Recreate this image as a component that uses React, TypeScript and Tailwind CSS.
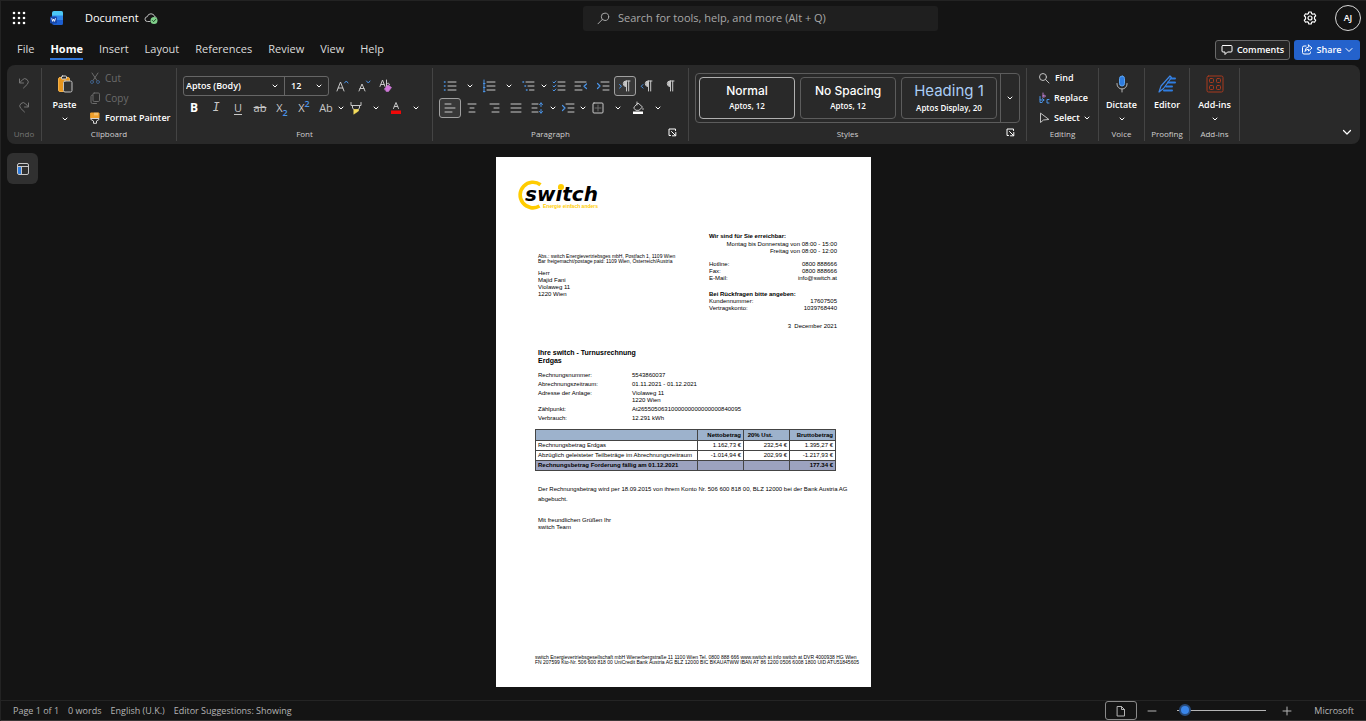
import type { ReactNode } from "react";
import clsx from "clsx";

const tabs = ["File", "Home", "Insert", "Layout", "References", "Review", "View", "Help"];

const styleCards = [
  { name: "Normal", font: "Aptos, 12", active: true, heading: false },
  { name: "No Spacing", font: "Aptos, 12", active: false, heading: false },
  { name: "Heading 1", font: "Aptos Display, 20", active: false, heading: true },
];

/* ---------- Icons ---------- */

const Icon = ({ size = 14, children }: { size?: number; children: ReactNode }) => (
  <svg
    width={size}
    height={size}
    viewBox={`0 0 ${size} ${size}`}
    fill="none"
    stroke="currentColor"
    strokeLinecap="round"
    strokeLinejoin="round"
    className="shrink-0"
    aria-hidden="true"
  >
    {children}
  </svg>
);

const Chevron = () => (
  <Icon size={6}>
    <path d="M1 2l2 2 2-2" />
  </Icon>
);

const WordLogo = () => (
  <Icon size={16}>
    <g stroke="none">
      <path d="M5 1h7.500q1.500 0 1.500 1.500V6H3V3q0-2 2-2z" fill="#4cc8f5" />
      <path d="M3 5.500h11V10H3z" fill="#2f86ea" />
      <path d="M3 10h11v3.500q0 1.500-1.500 1.500H5q-2 0-2-2z" fill="#1d5fd0" />
      <rect x="1" y="6.500" width="7" height="7" rx="1.200" fill="#1646a8" />
    </g>
    <path d="M2.800 8.600l.9 2.800.9-2.400.9 2.400.9-2.800" stroke="#fff" strokeWidth=".9" />
  </Icon>
);

const CloudSaved = () => (
  <Icon size={14}>
    <path d="M6 10.500H3.500a2.400 2.400 0 01-.2-4.800 3.800 3.800 0 017.400 0 2.200 2.200 0 011.600.8" stroke="#bdbdbd" />
    <circle cx="10" cy="9.500" r="3.500" fill="#7fd08a" stroke="none" />
    <path d="M8.500 9.600l1.100 1.100 2-2.200" stroke="#1b3a20" />
  </Icon>
);

const Gear = () => (
  <Icon size={14}>
    <path
      d="M5.800 1h2.400l.4 1.600 1.300.7 1.600-.5 1.200 2-1.200 1.200v2l1.200 1.200-1.200 2-1.600-.5-1.300.7L8.200 13H5.800l-.4-1.600-1.300-.7-1.600.5-1.200-2L2.500 8V6L1.300 4.800l1.200-2 1.600.5 1.300-.7z"
      strokeWidth="1.200"
    />
    <circle cx="7" cy="7" r="2" strokeWidth="1.200" />
  </Icon>
);

const SearchIcon = ({ flip = false }: { flip?: boolean }) => (
  <Icon size={13}>
    {flip ? (
      <>
        <circle cx="8" cy="4.800" r="3.700" />
        <path d="M5.300 7.500L1 11.800" />
      </>
    ) : (
      <>
        <circle cx="5" cy="5" r="3.500" />
        <path d="M7.700 7.700L11 11" />
      </>
    )}
  </Icon>
);

const UndoIcon = () => (
  <Icon size={12}>
    <path d="M1.500 2v4h4M1.700 5.800l2.700-3a3.300 3.300 0 014.900 4.500L5.500 11" />
  </Icon>
);

const RedoIcon = () => (
  <Icon size={12}>
    <path d="M10.500 2v4h-4M10.300 5.800l-2.700-3a3.300 3.300 0 00-4.900 4.500L6.500 11" />
  </Icon>
);

const PasteIcon = () => (
  <Icon size={18}>
    <rect x="2.500" y="2.500" width="11" height="14" rx="1.500" fill="#e8961e" stroke="#f2b04a" />
    <rect x="5.500" y="1" width="5" height="3" rx="1" fill="#292929" stroke="#d8d8d8" />
    <rect x="7.500" y="6" width="8.500" height="11" rx="1.500" fill="#333" stroke="#c4c4c4" />
  </Icon>
);

const CutIcon = () => (
  <Icon size={12}>
    <path d="M3 1l5 7.500M9 1L4 8.500" />
    <circle cx="3" cy="10" r="1.500" stroke="#3f5f86" />
    <circle cx="9" cy="10" r="1.500" stroke="#3f5f86" />
  </Icon>
);

const CopyIcon = () => (
  <Icon size={12}>
    <rect x="4" y="1" width="6.500" height="8.500" rx="1.200" />
    <path d="M3.500 3q-1.500 0-1.500 1.500V10q0 1.500 1.500 1.500h4" />
  </Icon>
);

const PainterIcon = () => (
  <Icon size={12}>
    <path d="M2 1h8v5H2z" fill="#f0a02c" stroke="#f0a02c" />
    <path d="M6 1v2M8 1v2" stroke="#fff0c8" strokeWidth=".8" />
    <path d="M2 6.500h8v1L7.500 9v2.300h-3V9L2 7.500z" stroke="#d6d6d6" />
  </Icon>
);

const GrowFont = () => (
  <Icon>
    <path d="M2 12l3.500-9L9 12M3.200 9h4.600" />
    <path d="M9.500 4l1.800-2L13 4" stroke="#4a94e8" />
  </Icon>
);

const ShrinkFont = () => (
  <Icon>
    <path d="M2 12l3-7 3 7M3 9.500h4" />
    <path d="M9.500 2l1.800 2L13 2" stroke="#4a94e8" />
  </Icon>
);

const ClearFormat = () => (
  <Icon>
    <path d="M1 7.500L3.500 1 6 7.500M2 5.500h3M7.500 1v6.500M7.500 5q2.500-2 3 .5" />
    <path d="M5.500 9.800l3.500-4 3.500 2.700-3 4H7.500z" fill="#cf78d8" stroke="#cf78d8" strokeWidth=".6" />
  </Icon>
);

const Highlighter = () => (
  <Icon>
    <path d="M2 1.500v3h10v-3M3.500 4.500V7l2 2h3l2-2V4.500" />
    <path d="M5 8.500h4.500v1.500L5 13z" fill="#f5dd5c" stroke="#f5dd5c" strokeWidth=".6" />
  </Icon>
);

const FontColor = () => (
  <Icon>
    <path d="M4.500 7.500L7 1.500l2.500 6M5.300 5.500h3.400" />
    <path d="M2 9.500h10v3.500H2z" fill="#f00808" stroke="none" />
  </Icon>
);

const lines = "M5 3h8M5 7h8M5 11h8";

const Bullets = () => (
  <Icon>
    <path d={lines} />
    <path d="M1.500 3h.5M1.500 7h.5M1.500 11h.5" stroke="#4a94e8" strokeWidth="1.600" />
  </Icon>
);

const Numbering = () => (
  <Icon>
    <path d={lines} />
    <path d="M2 1v12M1.500 4.500h1.500M1.500 8.500h1.500M1.500 12.500h1.500" stroke="#4a94e8" />
  </Icon>
);

const Multilevel = () => (
  <Icon>
    <path d="M4 3h8M6 7h6M7.500 11H12" />
    <path d="M1 3h.5M3 7h.5M4.500 11H5" stroke="#4a94e8" strokeWidth="1.600" />
  </Icon>
);

const Checklist = () => (
  <Icon>
    <path d="M6 3h7M6 7h7M6 11h7" />
    <path d="M1 3l1 1 1.800-2M1 7l1 1 1.800-2M1 11l1 1 1.800-2" stroke="#4a94e8" />
  </Icon>
);

const Outdent = () => (
  <Icon>
    <path d="M1 3h11M1 7h5.500M1 11h7" />
    <path d="M12.500 5l-2.500 2.300 2.500 2.200" stroke="#4a94e8" strokeWidth="1.200" />
  </Icon>
);

const Indent = () => (
  <Icon>
    <path d="M5 3h8M7 7h6M7 11h6" />
    <path d="M1.500 4.500L4 7l-2.500 2.500" stroke="#4a94e8" strokeWidth="1.200" />
  </Icon>
);

const Pilcrow = ({ arrow }: { arrow?: "left" | "right" }) => (
  <Icon>
    <path d="M8 7.500a2.700 2.700 0 010-5.500h4M8.500 2v10M10.700 2v10" />
    <path d="M8 2.300v5a2.600 2.600 0 010-5z" fill="currentColor" />
    {arrow === "right" && <path d="M1.500 5.500l2 1.800-2 1.800" stroke="#4a94e8" />}
    {arrow === "left" && <path d="M3 5.500L1.200 7.300 3 9.100" stroke="#4a94e8" />}
  </Icon>
);

const AlignLeft = () => (
  <Icon>
    <path d="M2 3h6M2 7h10M2 11h7" />
  </Icon>
);

const AlignCenter = () => (
  <Icon>
    <path d="M3 3h8M5 7h4M4 11h6" />
  </Icon>
);

const AlignRight = () => (
  <Icon>
    <path d="M3 3h9M7 7h5M5 11h7" />
  </Icon>
);

const Justify = () => (
  <Icon>
    <path d="M2 3h10M2 7h10M2 11h10" />
  </Icon>
);

const LineSpacing = () => (
  <Icon>
    <path d="M1 3h6M1 7h5M1 11h6" />
    <path d="M10 2v3.500M10 8.500V12M8.500 3.500L10 1.800l1.500 1.700M8.500 10.500l1.500 1.700 1.500-1.700" stroke="#4a94e8" />
  </Icon>
);

const Borders = () => (
  <Icon>
    <rect x="2" y="2" width="10" height="10" rx="1" />
    <path d="M7 4v6M4 7h6" stroke="#6c6c6c" />
  </Icon>
);

const Shading = () => (
  <Icon>
    <path d="M4 5l3-3 4.500 4L8 9.300H5L3 7.500zM6 1v3M12 7.500v1" />
    <path d="M2 10.500h10V13H2z" fill="#fff" stroke="none" />
  </Icon>
);

const Launcher = () => (
  <Icon size={9}>
    <path d="M2.500 7.500H1V1h6.500v1.500M3.500 3.500l4 4M7.800 4.500v3.300H4.500" />
  </Icon>
);

const ReplaceIcon = () => (
  <Icon size={12}>
    <path d="M5 1v4M5 3.500q2.500-1 2.500.5T5 5" stroke="#b77bc8" />
    <path d="M2 4.500v3.500h4M4.500 6.500L6 8l-1.500 1.500M11 7.500H9V11h2M2 8v2.500h2" stroke="#4a94e8" />
  </Icon>
);

const SelectIcon = () => (
  <Icon size={12}>
    <path d="M2.500 1.500v9l3-2.500 5-.5z" />
  </Icon>
);

const Microphone = () => (
  <Icon size={20}>
    <rect x="7.500" y="2" width="5" height="10" rx="2.500" fill="#2f7de0" stroke="#5aa2f0" />
    <path d="M5 9.500v.5a5 5 0 0010 0v-.5M10 15v3" stroke="#b5b5b5" />
  </Icon>
);

const EditorIcon = () => (
  <Icon size={20}>
    <path d="M2 18l2-6L13 2l1.500 1.500-8 11z" stroke="#3d86e6" strokeWidth="1.200" />
    <path d="M13.500 4.500H18M11 8.500h7M9 12.500h6M7 16.500h8" stroke="#2f7de0" strokeWidth="2" />
  </Icon>
);

const AddInsIcon = () => (
  <Icon size={20}>
    <g stroke="#a93a1e">
      <rect x="2" y="2" width="16" height="16" rx="1.500" />
      <rect x="4.500" y="4.500" width="4" height="4" rx="1" />
      <rect x="11.500" y="4.500" width="4" height="4" rx="1" />
      <rect x="4.500" y="11.500" width="4" height="4" rx="1" />
      <rect x="11.500" y="11.500" width="4" height="4" rx="1" />
    </g>
  </Icon>
);

const SwitchLogo = () => (
  <svg width="86" height="32" viewBox="0 0 86 32" role="img" aria-label="switch">
    <path d="M24.500 5.700A12.800 12.800 0 1023.500 27" fill="none" stroke="#fc0" strokeWidth="3.600" />
    <text x="9" y="22" fontFamily="'DejaVu Sans', sans-serif" fontSize="20" fontWeight="700" fontStyle="italic" fill="#000">
      switch
    </text>
    <circle cx="45" cy="8" r="3" fill="#fc0" />
    <text x="27" y="29" fontFamily="'Liberation Sans', Arial, sans-serif" fontSize="5" fontWeight="700" fill="#fc0">
      Energie einfach anders
    </text>
  </svg>
);

/* ---------- Ribbon pieces ---------- */

type GroupProps = {
  label: string;
  className: string;
  dim?: boolean;
  launcher?: boolean;
  children: ReactNode;
};

const Group = ({ label, className, dim, launcher, children }: GroupProps) => (
  <section className={clsx("flex shrink-0 flex-col border-r border-[#444]", className)}>
    <div className="h-[60px]">{children}</div>
    <div className="flex h-[13px] items-start">
      <span className={clsx("flex-1 text-center text-[8px] leading-3", dim ? "text-[#757575]" : "text-[#d0d0d0]")}>
        {label}
      </span>
      {launcher && (
        <button aria-label={`${label} settings`} className="flex w-5">
          <Launcher />
        </button>
      )}
    </div>
  </section>
);

type ToolProps = { label: string; active?: boolean; children: ReactNode };

const Tool = ({ label, active, children }: ToolProps) => (
  <button
    aria-label={label}
    className={clsx(
      "flex h-5 w-[22px] shrink-0 items-center justify-center text-[#c8c8c8]",
      active && "rounded-[3px] border border-[#a0a0a0] bg-[#383838]",
    )}
  >
    {children}
  </button>
);

const More = ({ className, label }: { className: string; label: string }) => (
  <button aria-label={`${label} options`} className={clsx("flex h-5 shrink-0 items-center justify-center", className)}>
    <Chevron />
  </button>
);

type SideToolProps = { icon: ReactNode; label: string; disabled?: boolean; chevron?: boolean };

const SideTool = ({ icon, label, disabled, chevron }: SideToolProps) => (
  <button
    disabled={disabled}
    className={clsx(
      "flex h-5 items-center gap-1 whitespace-nowrap",
      disabled ? "text-[10px] text-[#6b6b6b]" : "text-[9px] font-semibold",
    )}
  >
    <span className={disabled ? "text-[#6b6b6b]" : "text-[#c0c0c0]"}>{icon}</span>
    {label}
    {chevron && <Chevron />}
  </button>
);

const BigTool = ({ icon, label, chevron }: { icon: ReactNode; label: string; chevron?: boolean }) => (
  <button className="flex w-full flex-col items-center pt-[6px] text-[9px] font-semibold">
    <span className="flex h-5 items-center">{icon}</span>
    <span className="mt-1 leading-[14px] whitespace-nowrap">{label}</span>
    {chevron && (
      <span className="mt-1">
        <Chevron />
      </span>
    )}
  </button>
);

const Ribbon = () => (
  <div className="mr-[6px] ml-[6px] flex rounded-lg bg-[#292929] py-[3px]">
    <Group label="Undo" dim className="w-[35px]">
      <div className="flex flex-col items-center gap-3 pt-[9px] text-[#757575]">
        <button aria-label="Undo" disabled>
          <UndoIcon />
        </button>
        <button aria-label="Redo" disabled>
          <RedoIcon />
        </button>
      </div>
    </Group>

    <Group label="Clipboard" className="w-[135px]">
      <div className="flex gap-[2px]">
        <div className="w-[45px]">
          <BigTool icon={<PasteIcon />} label="Paste" chevron />
        </div>
        <div>
          <SideTool icon={<CutIcon />} label="Cut" disabled />
          <SideTool icon={<CopyIcon />} label="Copy" disabled />
          <SideTool icon={<PainterIcon />} label="Format Painter" />
        </div>
      </div>
    </Group>

    <Group label="Font" className="w-[256px]">
      <div className="flex flex-col gap-[2px] px-[6px] pt-2">
        <div className="flex">
          <div className="mr-[2px] flex h-5 rounded-[3px] border border-[#666] font-semibold">
            <label className="relative flex items-center border-r border-[#666]">
              <select aria-label="Font name" className="h-full w-[100px] appearance-none pl-[2px] text-[9px] outline-none">
                <option>Aptos (Body)</option>
              </select>
              <span className="pointer-events-none absolute right-[6px]">
                <Chevron />
              </span>
            </label>
            <label className="relative flex items-center">
              <select aria-label="Font size" className="h-full w-[43px] appearance-none pl-[6px] text-[9px] outline-none">
                <option>12</option>
              </select>
              <span className="pointer-events-none absolute right-[6px]">
                <Chevron />
              </span>
            </label>
          </div>
          <Tool label="Grow font"><GrowFont /></Tool>
          <Tool label="Shrink font"><ShrinkFont /></Tool>
          <Tool label="Clear formatting"><ClearFormat /></Tool>
        </div>
        <div className="flex text-[12px]">
          <Tool label="Bold"><b className="text-white">B</b></Tool>
          <Tool label="Italic"><i className="font-['Liberation_Mono',monospace]">I</i></Tool>
          <Tool label="Underline"><span className="text-[11px] underline underline-offset-2">U</span></Tool>
          <Tool label="Strikethrough"><s className="text-[11px]">ab</s></Tool>
          <Tool label="Subscript">
            <span className="text-[11px]">X</span>
            <span className="self-end text-[9px] leading-[11px] font-semibold text-[#4a94e8]">2</span>
          </Tool>
          <Tool label="Superscript">
            <span className="text-[11px]">X</span>
            <span className="self-start text-[9px] leading-[11px] font-semibold text-[#4a94e8]">2</span>
          </Tool>
          <Tool label="Change case"><span className="text-[11px]">Ab</span></Tool>
          <More label="Change case" className="w-2" />
          <Tool label="Highlight"><Highlighter /></Tool>
          <More label="Highlight" className="w-[18px]" />
          <Tool label="Font color"><FontColor /></Tool>
          <More label="Font color" className="w-[18px]" />
        </div>
      </div>
    </Group>

    <Group label="Paragraph" launcher className="w-[256px]">
      <div className="flex flex-col gap-[2px] px-[6px] pt-2">
        <div className="flex">
          <Tool label="Bullets"><Bullets /></Tool>
          <More label="Bullets" className="w-[17px]" />
          <Tool label="Numbering"><Numbering /></Tool>
          <More label="Numbering" className="w-[18px]" />
          <Tool label="Multilevel list"><Multilevel /></Tool>
          <More label="Multilevel list" className="w-2" />
          <Tool label="Checklist"><Checklist /></Tool>
          <Tool label="Decrease indent"><Outdent /></Tool>
          <Tool label="Increase indent"><Indent /></Tool>
          <Tool label="Left to right" active><Pilcrow arrow="right" /></Tool>
          <Tool label="Right to left"><Pilcrow arrow="left" /></Tool>
          <Tool label="Show marks"><Pilcrow /></Tool>
        </div>
        <div className="flex">
          <Tool label="Align left" active><AlignLeft /></Tool>
          <Tool label="Center"><AlignCenter /></Tool>
          <Tool label="Align right"><AlignRight /></Tool>
          <Tool label="Justify"><Justify /></Tool>
          <Tool label="Line spacing"><LineSpacing /></Tool>
          <More label="Line spacing" className="w-2" />
          <Tool label="Special indent"><Indent /></Tool>
          <More label="Special indent" className="w-2" />
          <Tool label="Borders"><Borders /></Tool>
          <More label="Borders" className="w-[18px]" />
          <Tool label="Shading"><Shading /></Tool>
          <More label="Shading" className="w-[18px]" />
        </div>
      </div>
    </Group>

    <Group label="Styles" launcher className="w-[338px]">
      <div className="px-[6px] pt-[5px]">
        <div className="flex h-[50px] rounded-[4px] border border-[#5c5c5c]">
          <div className="flex flex-1 gap-[5px] p-[3px]">
            {styleCards.map((card) => (
              <button
                key={card.name}
                className={clsx(
                  "flex w-24 flex-col items-center justify-center rounded-[4px] border",
                  card.active ? "border-[#b0b0b0]" : "border-[#5c5c5c]",
                )}
              >
                <span
                  className={clsx(
                    "font-['Inter','Open_Sans',sans-serif] whitespace-nowrap",
                    card.heading ? "text-[15px] leading-5 text-[#a9cdf5]" : "text-[12px] leading-4 font-medium",
                  )}
                >
                  {card.name}
                </span>
                <span className="text-[8px] leading-[14px] font-semibold">{card.font}</span>
              </button>
            ))}
          </div>
          <button aria-label="More styles" className="flex w-[19px] items-center justify-center border-l border-[#5c5c5c]">
            <Chevron />
          </button>
        </div>
      </div>
    </Group>

    <Group label="Editing" className="w-[72px]">
      <div className="pl-[11px]">
        <SideTool icon={<SearchIcon />} label="Find" />
        <SideTool icon={<ReplaceIcon />} label="Replace" />
        <SideTool icon={<SelectIcon />} label="Select" chevron />
      </div>
    </Group>

    <Group label="Voice" className="w-[46px]">
      <BigTool icon={<Microphone />} label="Dictate" chevron />
    </Group>
    <Group label="Proofing" className="w-[45px]">
      <BigTool icon={<EditorIcon />} label="Editor" />
    </Group>
    <Group label="Add-ins" className="w-[50px]">
      <BigTool icon={<AddInsIcon />} label="Add-ins" chevron />
    </Group>

    <button aria-label="Ribbon options" className="mr-2 mb-1 ml-auto self-end">
      <Icon size={10}>
        <path d="M1.500 3.500L5 7l3.500-3.500" strokeWidth="1.200" />
      </Icon>
    </button>
  </div>
);

/* ---------- Document ---------- */

const Row = ({ left, right }: { left: string; right: string }) => (
  <div className="flex justify-between">
    <span>{left}</span>
    <span>{right}</span>
  </div>
);

const Invoice = () => (
  <article className="flex h-[530px] w-[375px] flex-col bg-white font-['Liberation_Sans',Arial,sans-serif] text-[6px] leading-[7px] text-black">
    <div className="h-[75px] pt-[22px] pl-5">
      <SwitchLogo />
    </div>

    <div className="flex justify-between pr-[34px] pl-[42px]">
      <div>
        <div className="pt-[22px] text-[5px] leading-[5px] whitespace-nowrap">
          <p>Abs.: switch Energievertriebsges mbH, Postfach 1, 1109 Wien</p>
          <p>Bar freigemacht/postage paid: 1109 Wien, Österreich/Austria</p>
        </div>
        <address className="pt-[6px] not-italic">
          Herr
          <br />
          Majid Fani
          <br />
          Violaweg 11
          <br />
          1220 Wien
        </address>
      </div>
      <div className="w-[128px] whitespace-nowrap">
        <p className="mb-px leading-2 font-bold">Wir sind für Sie erreichbar:</p>
        <p className="text-right">Montag bis Donnerstag von 08:00 - 15:00</p>
        <p className="mb-[6px] text-right">Freitag von 08:00 - 12:00</p>
        <Row left="Hotline:" right="0800 888666" />
        <Row left="Fax:" right="0800 888666" />
        <Row left="E-Mail:" right="info@switch.at" />
        <p className="mt-2 leading-2 font-bold">Bei Rückfragen bitte angeben:</p>
        <Row left="Kundennummer:" right="17607505" />
        <Row left="Vertragskonto:" right="1039768440" />
        <p className="mt-[11px] text-right whitespace-pre">3  December 2021</p>
      </div>
    </div>

    <div className="pt-[19px] pl-[39px]">
      <h1 className="px-[3px] text-[7px] leading-2 font-bold">
        Ihre switch - Turnusrechnung
        <br />
        Erdgas
      </h1>
      <dl className="grid grid-cols-[94px_1fr] gap-y-[2px] px-[3px] pt-[7px]">
        <dt>Rechnungsnummer:</dt>
        <dd>5543860037</dd>
        <dt>Abrechnungszeitraum:</dt>
        <dd>01.11.2021 - 01.12.2021</dd>
        <dt>Adresse der Anlage:</dt>
        <dd>
          Violaweg 11
          <br />
          1220 Wien
        </dd>
        <dt>Zählpunkt:</dt>
        <dd>At2655050631000000000000000840095</dd>
        <dt>Verbrauch:</dt>
        <dd>12.291 kWh</dd>
      </dl>

      <table className="mt-[7px] w-[300px] table-fixed border-collapse text-right whitespace-nowrap [&_td]:h-[10px] [&_td]:border [&_td]:border-[#444] [&_td]:px-[2px] [&_th]:h-[11px] [&_th]:border [&_th]:border-[#444] [&_th]:px-[2px]">
        <colgroup>
          <col className="w-[162px]" />
          <col className="w-[46px]" />
          <col className="w-[46px]" />
          <col className="w-[46px]" />
        </colgroup>
        <thead className="bg-[#9db2cc]">
          <tr>
            <th />
            <th>Nettobetrag</th>
            <th className="text-left">&nbsp;20% Ust.</th>
            <th>Bruttobetrag</th>
          </tr>
        </thead>
        <tbody>
          <tr>
            <td className="text-left">Rechnungsbetrag Erdgas</td>
            <td>1.162,73 €</td>
            <td>232,54 €</td>
            <td>1.395,27 €</td>
          </tr>
          <tr>
            <td className="text-left">Abzüglich geleisteter Teilbeträge im Abrechnungszeitraum</td>
            <td>-1.014,94 €</td>
            <td>202,99 €</td>
            <td>-1.217,93 €</td>
          </tr>
          <tr className="bg-[#9ca3c0] font-bold">
            <td className="text-left">Rechnungsbetrag Forderung fällig am 01.12.2021</td>
            <td />
            <td />
            <td>177.34 €</td>
          </tr>
        </tbody>
      </table>

      <p className="px-[3px] pt-[13px] leading-[10px]">
        Der Rechnungsbetrag wird per 18.09.2015 von ihrem Konto Nr. 506 600 818 00, BLZ 12000 bei der Bank Austria AG
        <br />
        abgebucht.
      </p>
      <p className="px-[3px] pt-[13px]">
        Mit freundlichen Grüßen Ihr
        <br />
        switch Team
      </p>
    </div>

    <footer className="mt-auto pb-[22px] pl-[39px] text-[5px] leading-[5px] whitespace-nowrap">
      <p>switch Energievertriebsgesellschaft mbH Wienerbergstraße 11 1100 Wien Tel. 0800 888 666 www.switch at info switch at DVR 4000938 HG Wien</p>
      <p>FN 207599 Kto-Nr. 506 600 818 00 UniCredit Bank Austria AG BLZ 12000 BIC BKAUATWW IBAN AT 86 1200 0506 6008 1800 UID ATU51845605</p>
    </footer>
  </article>
);

/* ---------- App ---------- */

const App = () => {
  return (
    <div className="flex min-h-screen flex-col border-t border-l border-[#232323] bg-[#141414] font-['Open_Sans','Noto_Sans',sans-serif] text-white">
      {/* Title bar */}
      <header className="grid h-[34px] grid-cols-[582fr_355fr_428fr] items-center">
        <div className="flex items-center pl-[11px]">
          <button aria-label="App launcher" className="text-white">
            <Icon size={14}>
              <g fill="currentColor" stroke="none">
                {[2, 7, 12].map((y) => [2, 7, 12].map((x) => <circle key={`${x}-${y}`} cx={x} cy={y} r="1.300" />))}
              </g>
            </Icon>
          </button>
          <span className="ml-[23px]">
            <WordLogo />
          </span>
          <span className="ml-5 text-[11px] font-medium">Document</span>
          <span className="ml-[5px]">
            <CloudSaved />
          </span>
        </div>
        <label className="flex h-[25px] items-center gap-2 rounded-[3px] bg-[#1f1f1f] px-[14px] text-[#a8a8a8]">
          <SearchIcon flip />
          <input
            type="text"
            aria-label="Search"
            placeholder="Search for tools, help, and more (Alt + Q)"
            className="w-full text-[11px] outline-none placeholder:text-[#a8a8a8]"
          />
        </label>
        <div className="flex items-center justify-end gap-[18px] pr-[5px]">
          <button aria-label="Settings">
            <Gear />
          </button>
          <button className="flex size-[26px] items-center justify-center rounded-full border border-[#d8d8d8] text-[9px] font-semibold">
            AJ
          </button>
        </div>
      </header>

      {/* Tabs */}
      <div className="flex h-[30px] items-center justify-between pr-[6px] pl-4">
        <nav className="flex gap-4 text-[11px]">
          {tabs.map((tab) => (
            <a
              key={tab}
              href="#"
              className={clsx("border-b-2 leading-[18px]", tab === "Home" ? "border-[#2f75d8] font-bold" : "border-transparent text-[#dcdcdc]")}
            >
              {tab}
            </a>
          ))}
        </nav>
        <div className="flex gap-1 text-[9px] font-semibold">
          <button className="flex h-5 w-[75px] items-center justify-center gap-1 rounded-[3px] border border-[#6a6a6a] bg-[#242424]">
            <Icon size={12}>
              <path d="M2 1.500h8q1 0 1 1V7q0 1-1 1H6.500L4 10.500V8H2Q1 8 1 7V2.500q0-1 1-1z" />
            </Icon>
            Comments
          </button>
          <button className="flex h-5 w-[66px] items-center justify-center gap-1 rounded-[3px] bg-[#2462cc]">
            <Icon size={12}>
              <path d="M5 2H3Q1.500 2 1.500 3.500v5Q1.500 10 3 10h5q1.500 0 1.500-1.500V8M7.500 1L11 4 7.500 7V5.300Q5 5.300 4 7.500 4 3.300 7.500 2.800z" />
            </Icon>
            Share
            <Icon size={8}>
              <path d="M1 2.500l3 3 3-3" />
            </Icon>
          </button>
        </div>
      </div>

      <Ribbon />

      {/* Canvas */}
      <main className="grid flex-1 grid-cols-[1fr_auto_1fr] items-start py-[13px]">
        <button aria-label="Navigation" className="-mt-1 ml-[6px] flex size-[31px] items-center justify-center rounded-md bg-[#303030]">
          <Icon size={14}>
            <path d="M2 4h3v8H3q-1 0-1-1z" fill="#2f7de0" stroke="none" />
            <rect x="1.500" y="1.500" width="11" height="11" rx="1.500" stroke="#c8c8c8" />
            <path d="M2 4.500h10M5.500 5v7" stroke="#c8c8c8" />
          </Icon>
        </button>
        <Invoice />
      </main>

      {/* Status bar */}
      <footer className="flex h-[21px] items-center border-t border-b border-t-[#242424] border-b-[#3a3636] pr-3 pl-3 text-[9px] text-[#b4b4b4]">
        <div className="flex flex-1 gap-[9px] whitespace-nowrap">
          <span>Page 1 of 1</span>
          <span>0 words</span>
          <span>English (U.K.)</span>
          <span>Editor Suggestions: Showing</span>
        </div>
        <button aria-label="Page view" className="flex h-[19px] w-8 items-center justify-center rounded-[3px] border border-[#8a8a8a]">
          <Icon size={12}>
            <path d="M2.500 1.500h4l3 3V11h-7zM6.500 1.500v3h3" />
          </Icon>
        </button>
        <button aria-label="Zoom out" className="ml-[10px]">
          <Icon size={10}>
            <path d="M1 5h8" />
          </Icon>
        </button>
        <input
          type="range"
          aria-label="Zoom"
          min={0}
          max={100}
          defaultValue={2}
          className="mr-4 ml-5 h-3 w-[89px] appearance-none bg-transparent [&::-webkit-slider-runnable-track]:h-px [&::-webkit-slider-runnable-track]:bg-[#b4b4b4] [&::-webkit-slider-thumb]:-mt-[6px] [&::-webkit-slider-thumb]:size-3 [&::-webkit-slider-thumb]:appearance-none [&::-webkit-slider-thumb]:rounded-full [&::-webkit-slider-thumb]:border-2 [&::-webkit-slider-thumb]:border-[#294b7a] [&::-webkit-slider-thumb]:bg-[#3a86ea]"
        />
        <button aria-label="Zoom in" className="mr-[22px]">
          <Icon size={10}>
            <path d="M1 5h8M5 1v8" />
          </Icon>
        </button>
        <span>Microsoft</span>
      </footer>
    </div>
  );
};

export default App;
